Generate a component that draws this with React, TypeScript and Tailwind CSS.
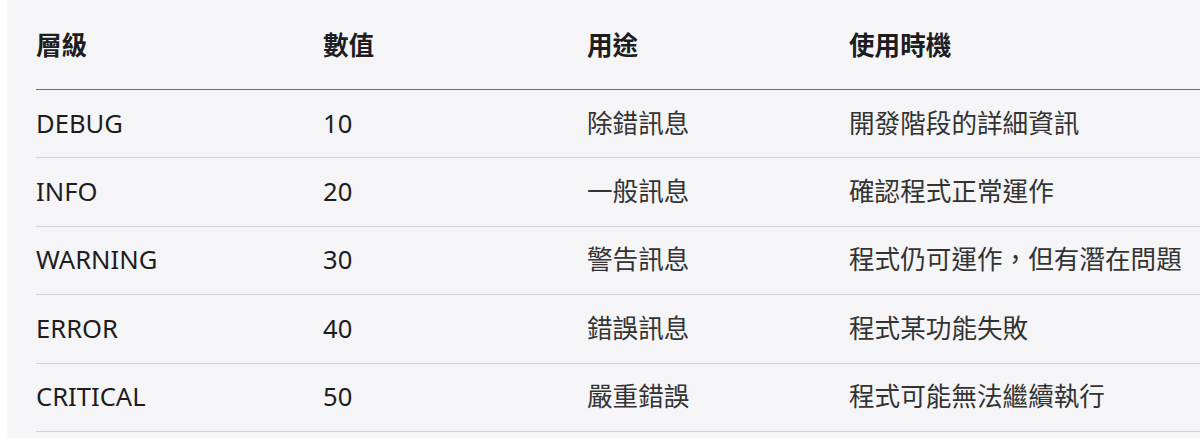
const rows = [
  { level: "DEBUG", value: "10", use: "除錯訊息", when: "開發階段的詳細資訊" },
  { level: "INFO", value: "20", use: "一般訊息", when: "確認程式正常運作" },
  { level: "WARNING", value: "30", use: "警告訊息", when: "程式仍可運作，但有潛在問題" },
  { level: "ERROR", value: "40", use: "錯誤訊息", when: "程式某功能失敗" },
  { level: "CRITICAL", value: "50", use: "嚴重錯誤", when: "程式可能無法繼續執行" },
];

const cols = "grid grid-cols-[287px_264px_262px_1fr]";

export default function App() {
  return (
    <div
      className="flex h-[438px] w-[1200px] overflow-hidden bg-white"
      style={{ fontFamily: '"Noto Sans", "Noto Sans CJK TC", sans-serif' }}
    >
      <div className="ml-[7px] flex-1 bg-[#f5f5f7] pl-[29px]">
        <div className="w-[1200px] text-[25.6px] text-[#1d1d1f]">
          {/* Header */}
          <div className={`${cols} h-[90px] items-center border-b border-[#6e6e73] pt-[3px] font-bold`}>
            <div>層級</div>
            <div>數值</div>
            <div>用途</div>
            <div>使用時機</div>
          </div>

          {rows.map((r) => (
            <div
              key={r.level}
              className={`${cols} h-[68.4px] items-center border-b border-[#d2d2d7]`}
            >
              <div>{r.level}</div>
              <div>{r.value}</div>
              <div className="text-[#333]">{r.use}</div>
              <div className="text-[#333]">{r.when}</div>
            </div>
          ))}
        </div>
      </div>
    </div>
  );
}
